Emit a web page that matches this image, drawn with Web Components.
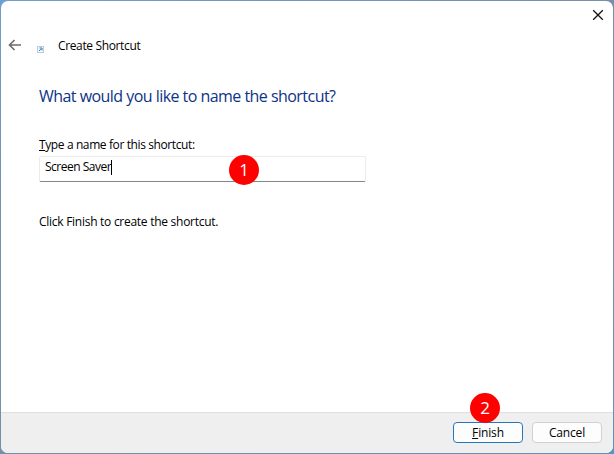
<!DOCTYPE html>
<html lang="en">
<head>
<meta charset="utf-8">
<title>Create Shortcut</title>
<style>
  html, body { height: 100%; }
  body {
    margin: 0;
    overflow: hidden;
    background: linear-gradient(160deg, #6f9fcb, #7690aa 30%, #7690aa 70%, #5b93bb);
    font: 12px/16px "Open Sans", "Noto Sans", sans-serif;
    color: #000;
  }
</style>
</head>
<body>
<shortcut-wizard></shortcut-wizard>
<script>
const wizardTemplate = document.createElement("template");
wizardTemplate.innerHTML = `
  <style>
    :host {
      display: block;
      box-sizing: border-box;
      height: 100vh;
      padding: 1px;
    }
    .window {
      height: 100%;
      box-sizing: border-box;
      display: flex;
      flex-direction: column;
      background: #fff;
      border-radius: 7px;
      overflow: hidden;
    }
    main {
      flex: 1;
      padding: 29px 38px 0;
    }
    h1 {
      margin: 0 0 29px;
      font-size: 16px;
      line-height: 24px;
      font-weight: 400;
      color: #0c3388;
      letter-spacing: -0.54px;
      white-space: nowrap;
    }
    p {
      margin: 32px 0 0;
      letter-spacing: -0.27px;
    }
    footer {
      display: flex;
      justify-content: flex-end;
      gap: 9px;
      height: 41px;
      box-sizing: border-box;
      padding: 9px 11px 0 0;
      border-top: 1px solid #dfdfdf;
      background: #efefef;
    }
  </style>
  <div class="window">
    <wizard-header>Create Shortcut</wizard-header>
    <main>
      <h1>What would you like to name the shortcut?</h1>
      <name-field value="Screen Saver">
        <span slot="label"><u>T</u>ype a name for this shortcut:</span>
        <step-badge slot="badge" style="left: 189px; top: -2px">1</step-badge>
      </name-field>
      <p>Click Finish to create the shortcut.</p>
    </main>
    <footer>
      <wizard-button primary>
        <u>F</u>inish
        <step-badge slot="badge" style="left: 17px; top: -29px">2</step-badge>
      </wizard-button>
      <wizard-button>Cancel</wizard-button>
    </footer>
  </div>`;

class ShortcutWizard extends HTMLElement {
  constructor() {
    super();
    this.attachShadow({ mode: "open" });
    this.shadowRoot.appendChild(wizardTemplate.content.cloneNode(true));
  }
}

const headerTemplate = document.createElement("template");
headerTemplate.innerHTML = `
  <style>
    :host { display: block; }
    .caption {
      display: flex;
      justify-content: flex-end;
      padding: 8px 9px 0 0;
      height: 28px;
      box-sizing: border-box;
    }
    .title {
      display: flex;
      align-items: center;
      height: 20px;
      padding: 6px 0 0 7px;
      letter-spacing: -0.36px;
    }
    svg { display: block; flex: none; }
    .shortcut { margin: 8px 14px 0 15px; }
    .text { padding-top: 2px; }
  </style>
  <div class="caption">
    <svg width="12" height="12" viewBox="0 0 12 12">
      <path d="M1.2 1.2l9.6 9.6M10.8 1.2l-9.6 9.6" stroke="#111" stroke-width="1.3"/>
    </svg>
  </div>
  <div class="title">
    <svg width="14" height="12" viewBox="0 0 14 12">
      <path d="M13 6H1.5M6.5 1l-5 5 5 5" fill="none" stroke="#6b6b6b" stroke-width="1.6"/>
    </svg>
    <svg class="shortcut" width="7" height="7" viewBox="0 0 7 7">
      <rect x=".5" y=".5" width="6" height="6" fill="#f4faff" stroke="#c3cad0"/>
      <path d="M2 5l2.5-2.5M2.5 2H5v2.5" fill="none" stroke="#2389d3"/>
    </svg>
    <span class="text"><slot></slot></span>
  </div>`;

class WizardHeader extends HTMLElement {
  constructor() {
    super();
    this.attachShadow({ mode: "open" });
    this.shadowRoot.appendChild(headerTemplate.content.cloneNode(true));
  }
}

const fieldTemplate = document.createElement("template");
fieldTemplate.innerHTML = `
  <style>
    :host { display: block; letter-spacing: -0.39px; }
    .label { height: 19px; }
    .box {
      position: relative;
      display: flex;
      width: 327px;
      height: 26px;
      box-sizing: border-box;
      padding: 2px 5px;
      border: 1px solid #ececec;
      border-bottom-color: #858585;
      border-radius: 2px;
    }
    .value { letter-spacing: -0.5px; }
    .caret { width: 1px; height: 15px; margin-top: 1px; background: #000; }
  </style>
  <div class="label"><slot name="label"></slot></div>
  <div class="box">
    <span class="value"></span><span class="caret"></span>
    <slot name="badge"></slot>
  </div>`;

class NameField extends HTMLElement {
  constructor() {
    super();
    this.attachShadow({ mode: "open" });
    this.shadowRoot.appendChild(fieldTemplate.content.cloneNode(true));
  }
  connectedCallback() {
    this.shadowRoot.querySelector(".value").textContent = this.getAttribute("value");
  }
}

const buttonTemplate = document.createElement("template");
buttonTemplate.innerHTML = `
  <style>
    :host {
      display: block;
      position: relative;
      width: 70px;
      height: 21px;
      letter-spacing: -0.15px;
    }
    button {
      display: block;
      width: 100%;
      height: 100%;
      padding: 0;
      border: 1px solid #d0d0d0;
      border-radius: 4px;
      background: #fdfdfd;
      color: inherit;
      font: inherit;
      letter-spacing: inherit;
    }
    :host([primary]) button { border-color: #2577bd; }
  </style>
  <button><slot></slot></button>
  <slot name="badge"></slot>`;

class WizardButton extends HTMLElement {
  constructor() {
    super();
    this.attachShadow({ mode: "open" });
    this.shadowRoot.appendChild(buttonTemplate.content.cloneNode(true));
  }
}

// red numbered callout, placed over its host control
const badgeTemplate = document.createElement("template");
badgeTemplate.innerHTML = `
  <style>
    :host {
      position: absolute;
      width: 30px;
      height: 30px;
      border-radius: 50%;
      background: #fe0000;
      color: #fff;
      font: 17px/30px "Open Sans", "Noto Sans", sans-serif;
      letter-spacing: 0;
      text-align: center;
    }
  </style>
  <slot></slot>`;

class StepBadge extends HTMLElement {
  constructor() {
    super();
    this.attachShadow({ mode: "open" });
    this.shadowRoot.appendChild(badgeTemplate.content.cloneNode(true));
  }
}

customElements.define("step-badge", StepBadge);
customElements.define("wizard-button", WizardButton);
customElements.define("name-field", NameField);
customElements.define("wizard-header", WizardHeader);
customElements.define("shortcut-wizard", ShortcutWizard);
</script>
</body>
</html>
